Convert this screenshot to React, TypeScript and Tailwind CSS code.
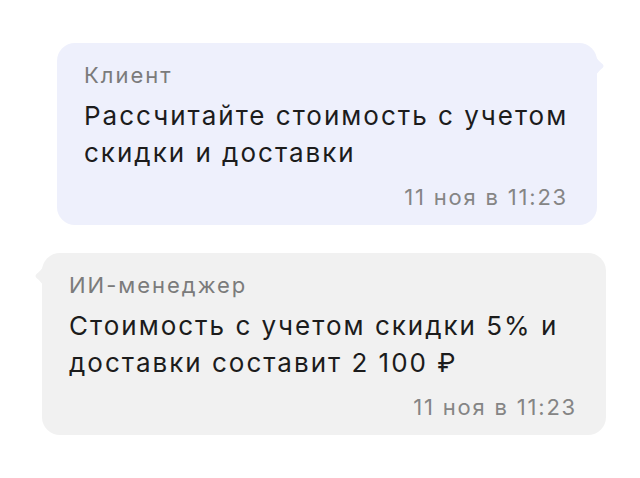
const font = { fontFamily: "Inter, 'Noto Sans', sans-serif" };

function Tail({ side }: { side: "left" | "right" }) {
  return (
    <svg
      width="10"
      height="22"
      viewBox="0 0 10 22"
      className={side === "right" ? "absolute -right-[8px] top-[12px]" : "absolute -left-[8px] top-[12px] -scale-x-100"}
    >
      <path d="M0 0 C2 4 4 6 7.5 9 Q9.5 11 7.5 13 C4 16 2 18 0 22 Z" fill="currentColor" />
    </svg>
  );
}

function Bubble({
  author,
  text,
  time,
  side,
  className,
}: {
  author: string;
  text: React.ReactNode;
  time: string;
  side: "left" | "right";
  className: string;
}) {
  return (
    <div className={`relative rounded-[18px] pt-[18px] pb-[14px] pl-[27px] pr-[29px] ${className}`}>
      <Tail side={side} />
      <div className="text-[22px] leading-[28px] tracking-[2px] text-[#7b7b7b]">{author}</div>
      <div className="mt-[8px] whitespace-nowrap text-[26px] leading-[37px] tracking-[2px] text-[#1c1c1c]">{text}</div>
      <div className="mt-[12px] text-right text-[22px] leading-[28px] tracking-[1.8px] text-[#858585]">{time}</div>
    </div>
  );
}

export default function App() {
  return (
    <div className="min-h-[478px] w-[640px] bg-white pt-[43px]" style={font}>
      <Bubble
        side="right"
        author="Клиент"
        text={
          <>
            Рассчитайте стоимость с учетом
            <br />
            скидки и доставки
          </>
        }
        time="11 ноя в 11:23"
        className="ml-[57px] w-[540px] bg-[#eef0fc] text-[#eef0fc]"
      />
      <Bubble
        side="left"
        author="ИИ-менеджер"
        text={
          <>
            Стоимость с учетом скидки 5% и
            <br />
            доставки составит 2 100 ₽
          </>
        }
        time="11 ноя в 11:23"
        className="mt-[28px] ml-[42px] w-[564px] bg-[#f1f1f1] text-[#f1f1f1]"
      />
    </div>
  );
}
